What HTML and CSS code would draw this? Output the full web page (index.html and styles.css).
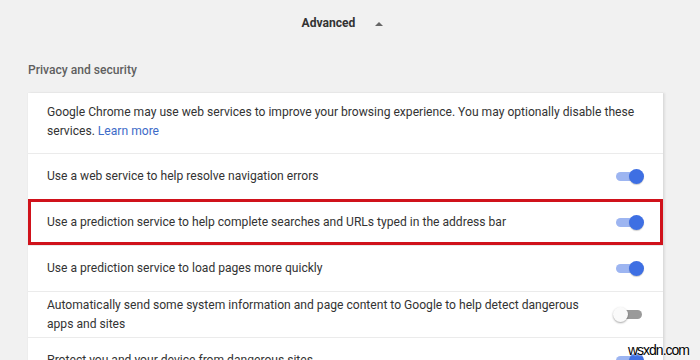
FILE: index.html
```html
<!DOCTYPE html>
<html lang="en">
<head>
  <meta charset="UTF-8">
  <meta name="viewport" content="width=device-width, initial-scale=1.0">
  <title>Settings - Advanced</title>
  <link rel="stylesheet" href="styles.css">
</head>
<body>
  <div class="page">
    <div class="advanced">
      <span>Advanced</span>
      <span class="arrow"></span>
    </div>

    <h2 class="section-title">Privacy and security</h2>

    <div class="card">
      <div class="row intro">
        <p>Google Chrome may use web services to improve your browsing experience. You may optionally disable these services. <a href="#">Learn more</a></p>
      </div>
      <div class="row">
        <p>Use a web service to help resolve navigation errors</p>
        <span class="toggle on"></span>
      </div>
      <div class="row highlight">
        <p>Use a prediction service to help complete searches and URLs typed in the address bar</p>
        <span class="toggle on"></span>
      </div>
      <div class="row">
        <p>Use a prediction service to load pages more quickly</p>
        <span class="toggle on"></span>
      </div>
      <div class="row">
        <p>Automatically send some system information and page content to Google to help detect dangerous apps and sites</p>
        <span class="toggle"></span>
      </div>
      <div class="row">
        <p>Protect you and your device from dangerous sites</p>
        <span class="toggle on"></span>
      </div>
    </div>
  </div>

  <div class="watermark">wsxdn.com</div>
</body>
</html>
```

FILE: styles.css
```css
* {
  margin: 0;
  padding: 0;
  box-sizing: border-box;
}

html, body {
  height: 100%;
  overflow: hidden;
}

body {
  font-family: Roboto, 'Liberation Sans', sans-serif;
  font-size: 12.1px;
  color: #333;
  background: #f1f1f1;
}

.page {
  padding: 0 37px 0 28px;
}

.advanced {
  height: 46px;
  display: flex;
  align-items: center;
  justify-content: center;
  gap: 20px;
  font-weight: 700;
  color: #333;
  padding-right: 6px;
}

.arrow {
  width: 0;
  height: 0;
  border-left: 4px solid transparent;
  border-right: 4px solid transparent;
  border-bottom: 4px solid #666;
  margin-top: 1px;
}

.section-title {
  font-size: 12.1px;
  font-weight: 500;
  color: #5f5f5f;
  height: 47px;
  line-height: 19px;
  padding-top: 15px;
}

.card {
  background: #fff;
  box-shadow: 0 0 1px rgba(0, 0, 0, 0.1), 2px 0 2px rgba(0, 0, 0, 0.08);
}

.row {
  min-height: 46px;
  display: flex;
  align-items: center;
  justify-content: space-between;
  gap: 24px;
  padding: 0 19px;
  border-top: 1px solid #ebebeb;
  line-height: 19px;
}

.row:first-child {
  border-top: none;
}

.row.intro {
  padding-top: 10px;
  padding-bottom: 12px;
}

.row.highlight {
  outline: 3px solid #d0121b;
  outline-offset: -3px;
  position: relative;
}

.row p {
  flex: 1;
}

a {
  color: #3d6bc8;
  text-decoration: none;
}

.toggle {
  position: relative;
  flex: none;
  width: 31px;
  height: 15px;
}

.toggle::before {
  content: "";
  position: absolute;
  left: 3px;
  right: 2px;
  top: 3px;
  height: 9px;
  border-radius: 5px;
  background: #9a9a9a;
}

.toggle::after {
  content: "";
  position: absolute;
  left: 0;
  top: 0;
  width: 15px;
  height: 15px;
  border-radius: 50%;
  background: #fafafa;
  box-shadow: 0 1px 2px rgba(0, 0, 0, 0.35);
}

.toggle.on::before {
  background: #9db5f1;
}

.toggle.on::after {
  left: 16px;
  background: #3e6fe3;
  box-shadow: 0 1px 1px rgba(0, 0, 0, 0.2);
}

.watermark {
  position: absolute;
  right: 11px;
  bottom: 2px;
  font-family: 'Liberation Sans', Arial, sans-serif;
  font-size: 14px;
  letter-spacing: -1px;
  color: #000;
  text-shadow: 0 0 2px #fff, 0 0 2px #fff;
}
```
